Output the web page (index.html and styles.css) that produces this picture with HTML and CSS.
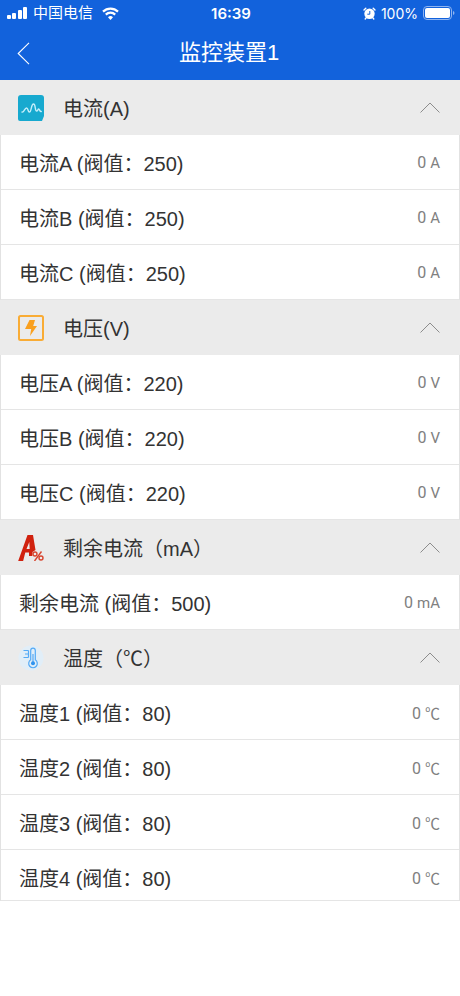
FILE: index.html
```html
<!DOCTYPE html>
<html lang="zh-CN">
<head>
  <meta charset="UTF-8">
  <meta name="viewport" content="width=device-width, initial-scale=1">
  <title>监控装置1</title>
  <link rel="stylesheet" href="styles.css">
</head>
<body>
  <header class="topbar">
    <div class="status">
      <div class="carrier">
        <svg width="21" height="14" viewBox="0 0 21 14" fill="#fff">
          <rect x="0" y="9" width="4" height="4" rx="1"/>
          <rect x="5" y="7" width="4" height="6" rx="1"/>
          <rect x="11" y="4" width="4" height="9" rx="1"/>
          <rect x="16" y="1" width="4" height="12" rx="1"/>
        </svg>
        <span class="carrier-name">中国电信</span>
        <svg width="17" height="13" viewBox="0 0 17 13" fill="none" stroke="#fff" stroke-width="2.2">
          <path d="M1 4.600a10.800 10.800 0 0 1 15 0"/>
          <path d="M3.800 7.600a6.700 6.700 0 0 1 9.400 0"/>
          <path d="M8.500 13 6 10.300a3.500 3.500 0 0 1 5 0z" fill="#fff" stroke="none"/>
        </svg>
      </div>
      <span class="clock">16:39</span>
      <div class="power">
        <svg width="13" height="13" viewBox="0 0 13 13">
          <circle cx="6.500" cy="6.800" r="5.200" fill="#fff"/>
          <path d="M1 3 2.800 1.200M12 3 10.200 1.200M3 11l-.8 1M10 11l.8 1" stroke="#fff" stroke-width="1.400" stroke-linecap="round"/>
          <path d="M6.800 4v3.200H4.300" fill="none" stroke="#1262dc"/>
        </svg>
        <span class="percent">100%</span>
        <svg width="32" height="14" viewBox="0 0 32 14">
          <rect x="0.500" y="0.500" width="28" height="13" rx="3.500" fill="none" stroke="#8fb4f0"/>
          <rect x="2" y="2" width="25" height="10" rx="2" fill="#fff"/>
          <path d="M30 5v4q1.500-.5 1.500-2T30 5z" fill="#8fb4f0"/>
        </svg>
      </div>
    </div>
    <div class="navbar">
      <button class="back" type="button" aria-label="返回">
        <svg width="13" height="23" viewBox="0 0 13 23" fill="none" stroke="#fff" stroke-width="1.100"><path d="M12 .8 1.200 11.500 12 22.200"/></svg>
      </button>
      <h1>监控装置1</h1>
    </div>
  </header>

  <main>
    <section>
      <button class="group" type="button" aria-expanded="true">
        <svg class="icon" viewBox="0 0 26 26">
          <path d="M3 0h20a3 3 0 0 1 3 3v18l-2 5H2a2 2 0 0 1-2-2V3a3 3 0 0 1 3-3z" fill="#17a9cf"/>
          <path d="M4 17c2 1 2.500-4 4.500-4s1 4 3 4 1.500-8 4-8 1 7 3.200 7c1.600 0 1-2 2-2s1 3 2.600 2.500" fill="none" stroke="#c5eefa" stroke-width="1.400" stroke-linecap="round"/>
        </svg>
        <span>电流(A)</span>
        <svg class="arrow" viewBox="0 0 20 11"><path d="M.5 10.500 10 1l9.500 9.500"/></svg>
      </button>
      <ul>
        <li><span>电流A (阀值：250)</span><span class="value">0 <small>A</small></span></li>
        <li><span>电流B (阀值：250)</span><span class="value">0 <small>A</small></span></li>
        <li><span>电流C (阀值：250)</span><span class="value">0 <small>A</small></span></li>
      </ul>
    </section>

    <section>
      <button class="group" type="button" aria-expanded="true">
        <svg class="icon" viewBox="0 0 26 26">
          <rect x="1" y="1" width="24" height="24" rx="1.500" fill="none" stroke="#f9ac35" stroke-width="2"/>
          <path d="M11.500 5H17l-1.800 6H19L12 21l1.200-7H7z" fill="#f9a01f"/>
        </svg>
        <span>电压(V)</span>
        <svg class="arrow" viewBox="0 0 20 11"><path d="M.5 10.500 10 1l9.500 9.500"/></svg>
      </button>
      <ul>
        <li><span>电压A (阀值：220)</span><span class="value">0 <small>V</small></span></li>
        <li><span>电压B (阀值：220)</span><span class="value">0 <small>V</small></span></li>
        <li><span>电压C (阀值：220)</span><span class="value">0 <small>V</small></span></li>
      </ul>
    </section>

    <section>
      <button class="group" type="button" aria-expanded="true">
        <svg class="icon" viewBox="0 0 26 26">
          <!-- leakage current mark -->
          <path d="M9.500 0H15l2.500 15-3 2-.3 4H11v-3.500H7.300L5 26.500H0zM11.300 7 8.500 14h3.200z" fill="#d0210e" fill-rule="evenodd"/>
          <g fill="none" stroke="#d8452f" stroke-width="1.400">
            <circle cx="17" cy="19" r="2"/>
            <circle cx="23" cy="23" r="2"/>
            <path d="M23.500 16.500 16.500 26"/>
          </g>
        </svg>
        <span>剩余电流（mA）</span>
        <svg class="arrow" viewBox="0 0 20 11"><path d="M.5 10.500 10 1l9.500 9.500"/></svg>
      </button>
      <ul>
        <li><span>剩余电流 (阀值：500)</span><span class="value">0 <small>mA</small></span></li>
      </ul>
    </section>

    <section>
      <button class="group" type="button" aria-expanded="true">
        <svg class="icon" viewBox="0 0 26 26">
          <circle cx="13" cy="13" r="12.500" fill="#e1eef8"/>
          <g fill="none" stroke="#55aaf5" stroke-width="1.200">
            <path d="M12.700 14.800V5.500a2.300 2.300 0 0 1 4.600 0v9.300a4.300 4.300 0 1 1-4.600 0z"/>
            <path d="M15 9v8M5.500 5.500h5M7 9h3.500M5.500 12.500h5M10.500 5.500v7"/>
          </g>
          <circle cx="15" cy="18.300" r="2" fill="#2f93ee"/>
        </svg>
        <span>温度（℃）</span>
        <svg class="arrow" viewBox="0 0 20 11"><path d="M.5 10.500 10 1l9.500 9.500"/></svg>
      </button>
      <ul>
        <li><span>温度1 (阀值：80)</span><span class="value">0 <small>℃</small></span></li>
        <li><span>温度2 (阀值：80)</span><span class="value">0 <small>℃</small></span></li>
        <li><span>温度3 (阀值：80)</span><span class="value">0 <small>℃</small></span></li>
        <li><span>温度4 (阀值：80)</span><span class="value">0 <small>℃</small></span></li>
      </ul>
    </section>
  </main>
</body>
</html>
```
FILE: styles.css
```css
* {
  box-sizing: border-box;
}
body {
  margin: 0;
  background: #fff;
  color: #333;
  font-family: "Liberation Sans", "Noto Sans CJK SC", sans-serif;
  font-size: 20px;
}
svg {
  display: block;
  flex: none;
}
button {
  border: 0;
  padding: 0;
  background: none;
  color: inherit;
  font: inherit;
  cursor: pointer;
}
.topbar {
  background: #1262dc;
  color: #fff;
}
.status {
  display: grid;
  grid-template-columns: 1fr auto 1fr;
  align-items: center;
  height: 26px;
  padding: 0 5px 0 7px;
  font-family: Inter, "Noto Sans CJK SC", sans-serif;
  font-size: 14px;
}
.carrier, .power {
  display: flex;
  align-items: center;
}
.carrier {
  gap: 5px;
}
.carrier-name {
  margin-right: 4px;
  font-size: 15px;
  line-height: 20px;
}
.clock {
  font-size: 15px;
  font-weight: 600;
}
.power {
  justify-content: flex-end;
  gap: 5px;
}
.navbar {
  display: grid;
  grid-template-columns: 60px 1fr 62px;
  align-items: center;
  height: 54px;
}
.back {
  padding: 10px 17px;
}
h1 {
  margin: 0;
  font-size: 22px;
  font-weight: 400;
  line-height: 32px;
  text-align: center;
}
.group {
  display: flex;
  align-items: center;
  width: 100%;
  height: 55px;
  padding: 0 20px 0 18px;
  background: #ebebeb;
  text-align: left;
}
.icon {
  width: 26px;
  height: 26px;
  margin-right: 19px;
}
.arrow {
  width: 20px;
  height: 11px;
  margin-left: auto;
  fill: none;
  stroke: #8c8c8c;
}
ul {
  margin: 0;
  padding: 0;
  border: solid #e2e2e2;
  border-width: 0 1px;
  list-style: none;
}
li {
  display: flex;
  align-items: center;
  justify-content: space-between;
  height: 55px;
  padding: 0 19px 0 18px;
  border-bottom: 1px solid #e5e5e5;
}
.value {
  color: #808080;
  font-family: Roboto, "Noto Sans CJK SC", sans-serif;
  font-size: 16px;
}
.value small {
  font-size: 15px;
}
section:last-child li:last-child {
  height: 51px;
  padding-top: 4px;
}
```
